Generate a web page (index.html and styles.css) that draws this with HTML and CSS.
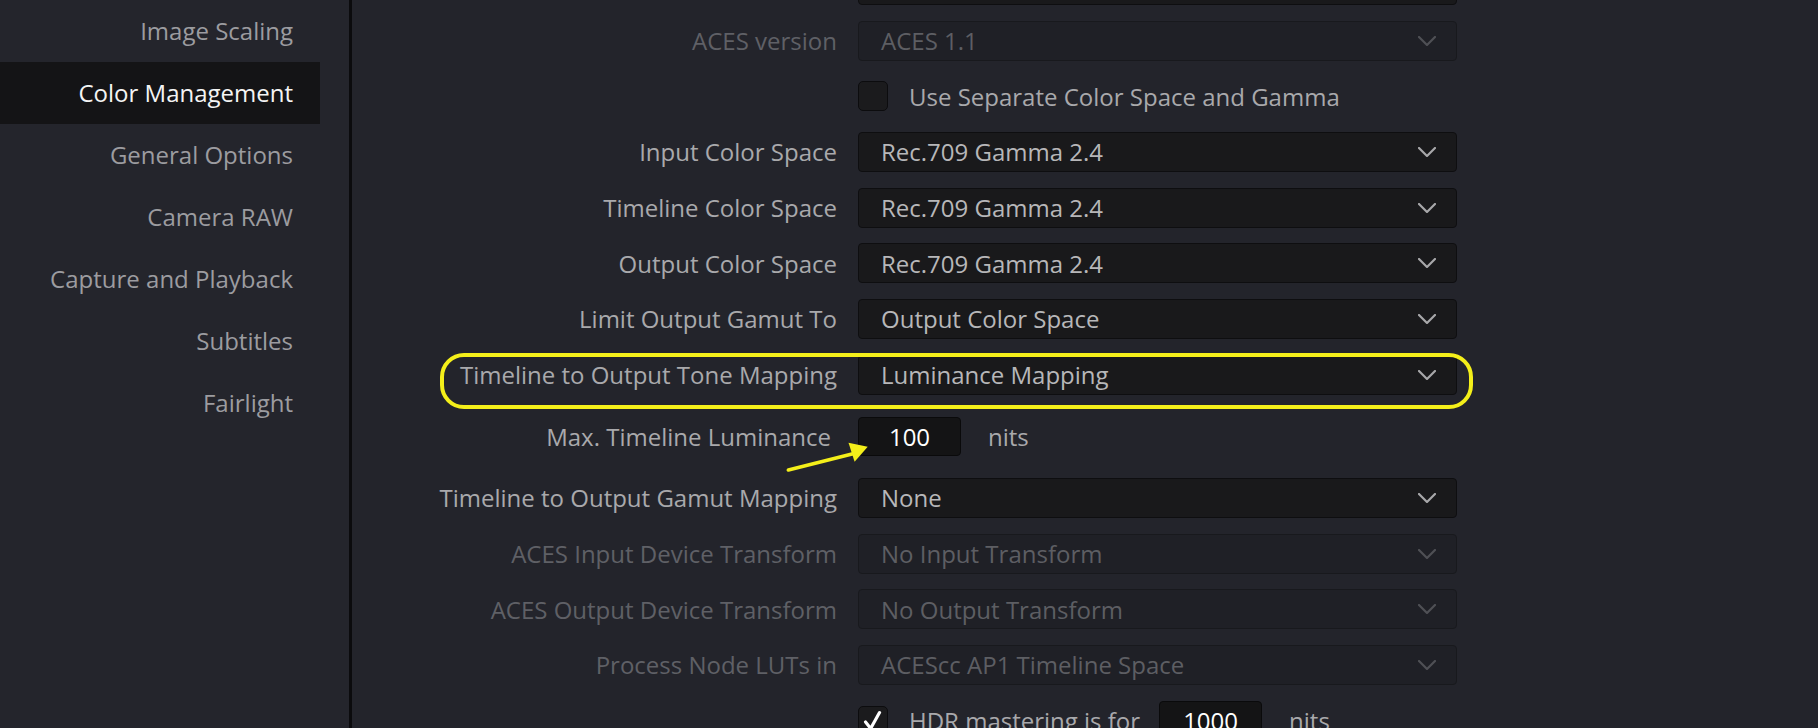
FILE: index.html
```html
<!DOCTYPE html>
<html lang="en">
<head>
<meta charset="utf-8">
<title>Color Management</title>
<link rel="stylesheet" href="styles.css">
</head>
<body>
<div class="app">
  <nav class="sidebar">
    <div class="nav-item">Image Scaling</div>
    <div class="nav-item active">Color Management</div>
    <div class="nav-item">General Options</div>
    <div class="nav-item">Camera RAW</div>
    <div class="nav-item">Capture and Playback</div>
    <div class="nav-item">Subtitles</div>
    <div class="nav-item">Fairlight</div>
  </nav>
  <main class="main">
    <div class="form">
      <div class="row">
        <div class="label"></div>
        <div class="select"><span class="value"></span><svg class="chev" viewBox="0 0 18 10"><polyline points="1,1 9,9 17,1"/></svg></div>
      </div>
      <div class="row">
        <div class="label disabled">ACES version</div>
        <div class="select disabled"><span class="value">ACES 1.1</span><svg class="chev" viewBox="0 0 18 10"><polyline points="1,1 9,9 17,1"/></svg></div>
      </div>
      <div class="row">
        <div class="label"></div>
        <div class="check-line"><span class="checkbox"></span><span class="check-text">Use Separate Color Space and Gamma</span></div>
      </div>
      <div class="row">
        <div class="label">Input Color Space</div>
        <div class="select"><span class="value">Rec.709 Gamma 2.4</span><svg class="chev" viewBox="0 0 18 10"><polyline points="1,1 9,9 17,1"/></svg></div>
      </div>
      <div class="row">
        <div class="label">Timeline Color Space</div>
        <div class="select"><span class="value">Rec.709 Gamma 2.4</span><svg class="chev" viewBox="0 0 18 10"><polyline points="1,1 9,9 17,1"/></svg></div>
      </div>
      <div class="row">
        <div class="label">Output Color Space</div>
        <div class="select"><span class="value">Rec.709 Gamma 2.4</span><svg class="chev" viewBox="0 0 18 10"><polyline points="1,1 9,9 17,1"/></svg></div>
      </div>
      <div class="row">
        <div class="label">Limit Output Gamut To</div>
        <div class="select"><span class="value">Output Color Space</span><svg class="chev" viewBox="0 0 18 10"><polyline points="1,1 9,9 17,1"/></svg></div>
      </div>
      <div class="row">
        <div class="label">Timeline to Output Tone Mapping</div>
        <div class="select"><span class="value">Luminance Mapping</span><svg class="chev" viewBox="0 0 18 10"><polyline points="1,1 9,9 17,1"/></svg></div>
      </div>
      <div class="row tall">
        <div class="label inset">Max. Timeline Luminance</div>
        <div class="field-line"><span class="num-field">100</span><span class="unit">nits</span></div>
      </div>
      <div class="row">
        <div class="label">Timeline to Output Gamut Mapping</div>
        <div class="select"><span class="value">None</span><svg class="chev" viewBox="0 0 18 10"><polyline points="1,1 9,9 17,1"/></svg></div>
      </div>
      <div class="row">
        <div class="label disabled">ACES Input Device Transform</div>
        <div class="select disabled"><span class="value">No Input Transform</span><svg class="chev" viewBox="0 0 18 10"><polyline points="1,1 9,9 17,1"/></svg></div>
      </div>
      <div class="row">
        <div class="label disabled">ACES Output Device Transform</div>
        <div class="select disabled"><span class="value">No Output Transform</span><svg class="chev" viewBox="0 0 18 10"><polyline points="1,1 9,9 17,1"/></svg></div>
      </div>
      <div class="row">
        <div class="label disabled">Process Node LUTs in</div>
        <div class="select disabled"><span class="value">ACEScc AP1 Timeline Space</span><svg class="chev" viewBox="0 0 18 10"><polyline points="1,1 9,9 17,1"/></svg></div>
      </div>
      <div class="row">
        <div class="label"></div>
        <div class="check-line">
          <span class="checkbox checked"><svg viewBox="0 0 30 30"><polyline points="7,16 12.5,23 22,6"/></svg></span>
          <span class="check-text">HDR mastering is for</span>
          <span class="num-field hdr">1000</span><span class="unit">nits</span>
        </div>
      </div>
    </div>
    <div class="highlight"></div>
    <svg class="arrow" viewBox="0 0 100 45">
      <line x1="6.4" y1="34" x2="72" y2="17.5"/>
      <polygon points="85.7,10.7 66.5,6.7 72.6,25.7"/>
    </svg>
  </main>
</div>
</body>
</html>
```

FILE: styles.css
```css
html, body {
  margin: 0;
  padding: 0;
  height: 728px;
  overflow: hidden;
  background: #23242b;
}

.app {
  display: flex;
  height: 728px;
  font-family: "Open Sans", "DejaVu Sans", sans-serif;
  font-size: 24px;
}

.sidebar {
  width: 349px;
  flex: 0 0 349px;
  background: #24252c;
  border-right: 3px solid #0b0b0d;
  display: flex;
  flex-direction: column;
}

.nav-item {
  width: 320px;
  height: 62px;
  line-height: 62px;
  box-sizing: border-box;
  padding-right: 27px;
  text-align: right;
  color: #9c9ca0;
  white-space: nowrap;
}

.nav-item.active {
  background: #141416;
  color: #f4f4f4;
}

.main {
  position: relative;
  flex: 1;
  overflow: hidden;
  background: #23242b;
}

.form {
  margin-top: -43px;
  display: flex;
  flex-direction: column;
}

.row {
  height: 55.7px;
  display: flex;
  align-items: center;
  column-gap: 21px;
}

.row.tall {
  height: 67.5px;
}

.label {
  width: 485px;
  flex: 0 0 485px;
  text-align: right;
  color: #a9a9ac;
  white-space: nowrap;
}

.label.inset {
  box-sizing: border-box;
  padding-right: 6px;
}

.label.disabled {
  color: #5f6066;
}

.select {
  width: 599px;
  height: 40px;
  box-sizing: border-box;
  border: 1px solid #0e0e10;
  border-radius: 4px;
  background: #19191b;
  display: flex;
  align-items: center;
  justify-content: space-between;
  padding: 0 20px 0 22px;
  color: #b7b7b9;
}

.select.disabled {
  background: #1f2026;
  border-color: #18191d;
  color: #5d5e63;
}

.value {
  white-space: nowrap;
}

.chev {
  width: 18px;
  height: 10px;
  fill: none;
  stroke: #a8a8aa;
  stroke-width: 2.2;
  stroke-linecap: round;
  stroke-linejoin: round;
}

.select.disabled .chev {
  stroke: #4f5055;
}

.check-line {
  display: flex;
  align-items: center;
}

.checkbox {
  width: 30px;
  height: 30px;
  box-sizing: border-box;
  border: 1px solid #0c0c0e;
  border-radius: 5px;
  background: #1b1b1d;
  display: flex;
  align-items: center;
  justify-content: center;
}

.checkbox svg {
  width: 28px;
  height: 28px;
  fill: none;
  stroke: #ffffff;
  stroke-width: 3.4;
  stroke-linecap: round;
  stroke-linejoin: round;
}

.check-text {
  margin-left: 21px;
  color: #a9a9ac;
  white-space: nowrap;
}

.field-line {
  display: flex;
  align-items: center;
}

.num-field {
  width: 103px;
  height: 39px;
  box-sizing: border-box;
  border: 1px solid #0a0a0b;
  border-radius: 4px;
  background: #141415;
  color: #ffffff;
  display: flex;
  align-items: center;
  justify-content: center;
}

.num-field.hdr {
  margin-left: 19px;
}

.unit {
  margin-left: 27px;
  color: #a9a9ac;
}

.highlight {
  position: absolute;
  left: 87.5px;
  top: 353px;
  width: 1033px;
  height: 56px;
  box-sizing: border-box;
  border: 4px solid #f4ef1a;
  border-radius: 24px;
  pointer-events: none;
}

.arrow {
  position: absolute;
  left: 430px;
  top: 436px;
  width: 100px;
  height: 45px;
  overflow: visible;
}

.arrow line {
  stroke: #f4ef1a;
  stroke-width: 3.6;
  stroke-linecap: round;
}

.arrow polygon {
  fill: #f4ef1a;
}
```
